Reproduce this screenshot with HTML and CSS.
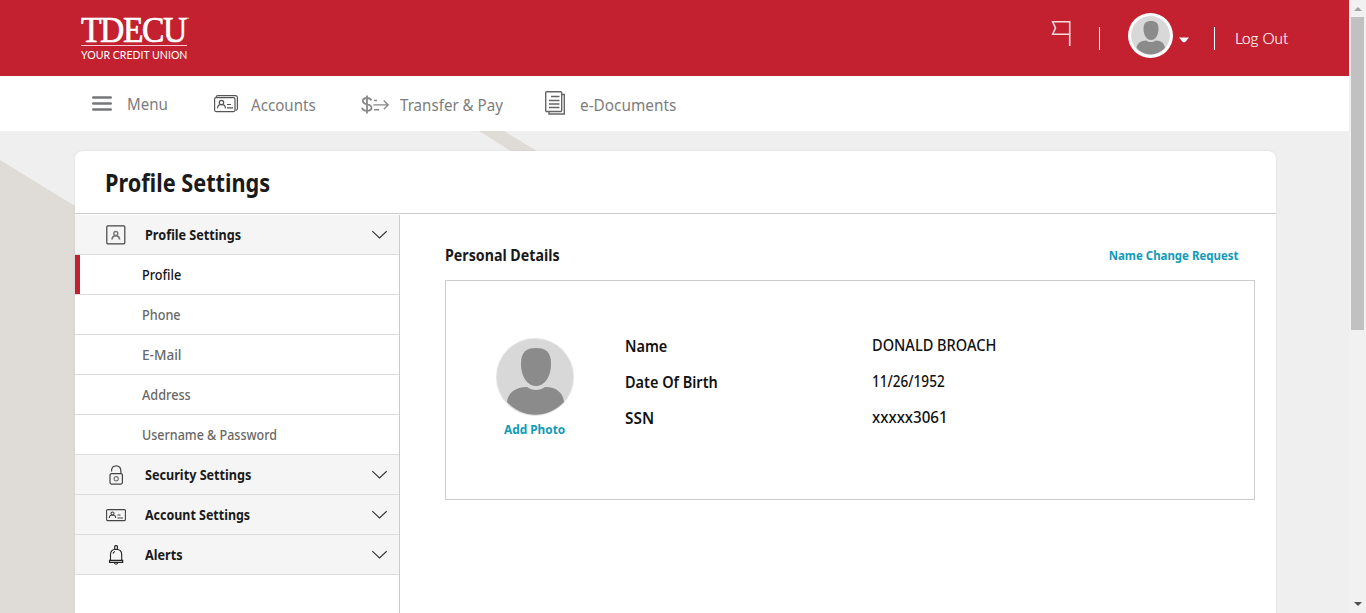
FILE: index.html
```html
<!DOCTYPE html>
<html lang="en">
<head>
<meta charset="utf-8">
<title>Profile Settings</title>
<link rel="stylesheet" href="styles.css">
</head>
<body>
<svg class="defs" width="0" height="0">
  <symbol id="person" viewBox="0 0 78 78">
    <circle cx="39" cy="39" r="39" fill="#e2e2e2"/>
    <circle cx="39" cy="39" r="38" fill="#d8d8d8"/>
    <path d="M25 26c0-12 5-16 15-16s15 4 15 16-6 22-15 22-15-10-15-22z" fill="#8b8b8b"/>
    <path d="M11 64c1-9 8-15 20-15 5 4 13 4 18 0 12 0 18 6 19 15-16 17-42 17-57 0z" fill="#8b8b8b"/>
  </symbol>
  <symbol id="chevron" viewBox="0 0 16 10"><path d="M1.300 1.200 8.500 8l7.200-6.800" fill="none" stroke="#333" stroke-width="1.100"/></symbol>
</svg>
<div class="window">
  <div class="page">
    <header class="header">
      <div class="logo">
        <div class="logo-name"><span>TDECU</span><small>™</small></div>
        <div class="logo-tag"><span>YOUR CREDIT UNION</span></div>
      </div>
      <div class="user">
        <svg class="flag" width="20" height="27" viewBox="0 0 20 27"><path d="M18.700 26V1.800H1.700L4.500 8 1.700 14.200h17" fill="none" stroke="#fbdde0" stroke-width="1.600"/></svg>
        <i class="divider first"></i>
        <span class="avatar"><svg width="39" height="39"><use href="#person"/></svg></span>
        <svg class="caret" width="10" height="6" viewBox="0 0 10 6"><path d="M0 .5h10L6.500 4.700q-1.500 1.200-3 0z" fill="#fff"/></svg>
        <i class="divider second"></i>
        <a class="logout"><span>Log Out</span></a>
      </div>
    </header>
    <nav class="nav">
      <a class="menu"><svg width="20" height="16" viewBox="0 0 20 16"><path d="M1.300 2.500h17.400M1.300 8.500h17.400M1.300 14.500h17.400" stroke="#757779" stroke-width="2.600" stroke-linecap="round"/></svg><span>Menu</span></a>
      <a class="accounts"><svg width="24" height="18" viewBox="0 0 24 18" fill="none" stroke="#555" stroke-width="1.200"><rect x=".6" y="2.600" width="20.400" height="14" rx="1.500"/><path d="M2 2.200Q2.200.6 4 .6h17.400q2 0 2 2v11q0 1.800-1.800 1.800"/><circle cx="7.500" cy="7.500" r="2.200"/><path d="M3.500 13.300q.5-3.600 3-3.600h2q2.500 0 3 3.600M13 9.500h4M13 12.800h6"/></svg><span>Accounts</span></a>
      <a class="transfer"><svg width="28" height="19" viewBox="0 0 28 19" fill="none" stroke="#888" stroke-width="1.800"><path d="M10.300 5.500Q9.500 3 6 3 2 3 1.800 5.700q0 2.500 4 3.500 4.700 1 4.700 3.500 0 3-4.500 3-4.300 0-5-3M6 .5v18"/><path d="M13 5.500h3M12.500 9.900H27M13 14.800h5M22.700 5.500l4.500 4.400-4.500 4.400" stroke-width="1.400"/></svg><span>Transfer &amp; Pay</span></a>
      <a class="documents"><svg width="20" height="25" viewBox="0 0 20 25" fill="none" stroke="#666" stroke-width="1.400"><rect x=".7" y="1.700" width="16" height="19.800" rx="1"/><path d="M17 4.500h2.300v19.500H4V21.800"/><path d="M6 6.500h8.500M4 10.500h10.500M4 14h10.500M4 17.500h10.500"/></svg><span>e-Documents</span></a>
    </nav>
    <div class="content">
      <svg class="backdrop" width="1349" height="482" viewBox="0 0 1349 482"><path d="M0 29 75 75 650 420V482H0zM479 0h25L700 119v20z" fill="#dfdcd8"/></svg>
      <main class="card">
        <h1><span>Profile Settings</span></h1>
        <div class="columns">
          <aside class="sidebar">
            <a class="group"><svg class="icon" width="20" height="20" viewBox="0 0 20 20" fill="none" stroke="#444" stroke-width="1.200"><rect x=".8" y=".8" width="18" height="18" rx="1"/><circle cx="9.800" cy="8.500" r="2" stroke="#777" stroke-width="1.400"/><path d="M6 14.500q.4-3.500 2.800-3.500h2q2.400 0 2.800 3.500" stroke="#777" stroke-width="1.700"/></svg><span>Profile Settings</span><svg class="chev" width="16" height="10"><use href="#chevron"/></svg></a>
            <a class="item active"><span>Profile</span></a>
            <a class="item"><span>Phone</span></a>
            <a class="item email"><span>E-Mail</span></a>
            <a class="item"><span>Address</span></a>
            <a class="item username"><span>Username &amp; Password</span></a>
            <a class="group"><svg class="icon" width="20" height="20" viewBox="0 0 20 20" fill="none" stroke="#444" stroke-width="1.200"><rect x="4" y="8.600" width="12.400" height="10.500" rx="1.500"/><path d="M5.500 6.500q0-5.700 4.700-5.700t4.700 5.700v2"/><circle cx="10.200" cy="13.800" r="2.100" stroke="#777"/></svg><span>Security Settings</span><svg class="chev" width="16" height="10"><use href="#chevron"/></svg></a>
            <a class="group account"><svg class="icon" width="20" height="20" viewBox="0 0 20 20" fill="none" stroke="#444" stroke-width="1.100"><rect x=".6" y="4.600" width="18.800" height="11" rx="1"/><circle cx="6.500" cy="8.500" r="1.500"/><path d="M3.300 13q.2-2.700 2-2.700h2.400q1.800 0 2 2.700M11.500 10h3M11.500 13h5.500"/></svg><span>Account Settings</span><svg class="chev" width="16" height="10"><use href="#chevron"/></svg></a>
            <a class="group"><svg class="icon" width="20" height="20" viewBox="0 0 20 20" fill="none" stroke="#222" stroke-width="1.100"><path d="M4.500 15.200V9.500Q4.500 4.300 10 4.200q5.700.1 5.700 5.300v5.700M3.500 15.400h13.200v2H3.500zM8.300 17.700q1.800 3 3.600 0M8.700 4V1.200q1.300-1.300 2.700 0V4M7 8.500q.5-1.500 2-2"/></svg><span>Alerts</span><svg class="chev" width="16" height="10"><use href="#chevron"/></svg></a>
          </aside>
          <section class="details">
            <div class="details-head"><h2><span>Personal Details</span></h2><a class="link request"><span>Name Change Request</span></a></div>
            <div class="panel">
              <div class="photo"><svg width="78" height="78"><use href="#person"/></svg><a class="link add"><span>Add Photo</span></a></div>
              <dl>
                <dt class="name"><span>Name</span></dt><dd class="name"><span>DONALD BROACH</span></dd>
                <dt class="birth"><span>Date Of Birth</span></dt><dd class="birth"><span>11/26/1952</span></dd>
                <dt class="ssn"><span>SSN</span></dt><dd class="ssn"><span>xxxxx3061</span></dd>
              </dl>
            </div>
          </section>
        </div>
      </main>
    </div>
  </div>
  <div class="scrollbar"><i class="up"></i><i class="thumb"></i><i class="down"></i></div>
</div>
</body>
</html>
```

FILE: styles.css
```css
* { box-sizing: border-box; }
body { margin: 0; height: 613px; overflow: hidden; font-family: "Noto Sans", "Open Sans", sans-serif; color: #1a1a1a; background: #efefef; }
h1, h2, dl, dt, dd { margin: 0; }
svg { display: block; flex: none; }
.defs { position: absolute; }
span { display: inline-block; white-space: nowrap; transform-origin: 0 50%; }
.window { display: grid; grid-template-columns: 1349px 17px; height: 613px; }
.page { display: flex; flex-direction: column; height: 613px; overflow: hidden; }
.header { height: 76px; flex: none; background: #c32030; color: #fff; display: flex; justify-content: space-between; padding: 13px 61px 0 81px; }
.logo { width: 106px; }
.logo-name { display: flex; height: 33px; border-bottom: 1px solid #f3c9cd; font: 35px/35px "Liberation Serif", serif; letter-spacing: -1.5px; }
.logo-name span { transform: scaleX(.96); -webkit-text-stroke: .7px #fff; }
.logo-name small { font-size: 4px; line-height: 11px; margin-left: -5px; letter-spacing: 0; }
.logo-tag { font: 11px/18px Lato, sans-serif; }
.logo-tag span { transform: scaleX(.96); }
.user { display: flex; align-items: flex-start; }
.flag { margin-top: 7px; }
.divider { width: 1px; height: 23px; margin-top: 14px; background: #fff; }
.divider.first { margin-left: 28px; }
.avatar { width: 45px; height: 45px; margin-left: 28px; padding: 3px; border-radius: 50%; background: #fff; }
.caret { margin: 24px 0 0 6px; }
.divider.second { margin-left: 25px; }
.logout { margin: 13px 0 0 20px; width: 53px; font: 300 16px/23px Lato, sans-serif; }
.logout span { transform: scaleX(.96); -webkit-text-stroke: .2px #fff; }
.nav { height: 55px; flex: none; display: flex; background: #fff; color: #7d7d7d; font-size: 17px; line-height: 24px; padding-left: 92px; }
.nav a { display: flex; }
.nav span { transform: scaleX(.89); }
.menu { width: 122px; padding-top: 16px; gap: 15px; }
.menu svg { margin-top: 3px; }
.accounts { width: 147px; padding-top: 17px; gap: 13px; }
.accounts svg { margin-top: 2px; }
.transfer { width: 184px; padding-top: 17px; gap: 11px; }
.transfer svg { margin-top: 2px; }
.documents { padding-top: 17px; gap: 15px; }
.documents svg { margin-top: -3px; }
.nav .documents span { transform: scaleX(.903); }
.content { flex: 1; padding: 20px 73px 0 75px; background: #efefef; position: relative; }
.backdrop { position: absolute; inset: 0; }
.card { position: relative; height: 480px; background: #fff; border-radius: 8px 8px 0 0; box-shadow: 0 0 3px rgba(0,0,0,.08); }
h1 { height: 63px; border-bottom: 1px solid #ccc; padding-left: 30px; font-size: 25px; line-height: 62px; font-weight: 700; }
h1 span { transform: scaleX(.868); }
.columns { display: flex; height: 417px; padding-top: 1px; }
.sidebar { width: 325px; border-right: 1px solid #ccc; }
.group, .item { display: flex; align-items: center; height: 40px; border-bottom: 1px solid #ddd; font-size: 15px; }
.group { background: #f5f5f5; padding: 0 12px 0 31px; font-weight: 700; }
.group span { margin: -2px 0 0 19px; transform: scaleX(.842); }
.group.account span { transform: scaleX(.83); }
.chev { margin-left: auto; }
.item { padding-left: 67px; color: #686868; font-weight: 500; }
.item span { margin-top: -2px; transform: scaleX(.845); }
.item.email span { transform: scaleX(.905); }
.item.username span { transform: scaleX(.834); }
.item.active { box-shadow: inset 5px 0 #c32030; color: #111; }
.details { flex: 1; padding: 27px 21px 0 45px; }
.details-head { display: flex; justify-content: space-between; height: 38px; padding-right: 17px; }
h2 { font-size: 16px; line-height: 26px; font-weight: 700; }
h2 span { transform: scaleX(.888); }
.link { color: #109bb8; font-size: 13px; line-height: 26px; font-weight: 700; }
.request span { transform: scaleX(.88); transform-origin: 100% 50%; }
.add span { transform: scaleX(.91); transform-origin: 50% 50%; }
.panel { height: 220px; border: 1px solid #ccc; display: flex; padding: 57px 0 0 50px; }
.photo { width: 78px; display: flex; flex-direction: column; align-items: center; }
dl { margin-left: 51px; display: grid; grid-template-columns: 247px 200px; grid-auto-rows: 36px; height: 108px; margin-top: -11px; font-size: 16px; line-height: 38px; color: #111; }
dt { font-weight: 600; }
dd { font-weight: 500; line-height: 36px; }
dt span { transform: scaleX(.905); }
dt.ssn span { transform: scaleX(.96); }
dd.name span { transform: scaleX(.91); }
dd.birth span { transform: scaleX(.85); }
dd.ssn span { transform: scaleX(.945); }
.scrollbar { background: #f1f1f1; display: flex; flex-direction: column; align-items: center; }
.up, .down { width: 0; height: 0; border: 4px solid transparent; }
.up { border-bottom-color: #a3a3a3; border-top: 0; margin: 7px 0 6px; }
.thumb { width: 13px; height: 313px; background: #c1c1c1; }
.down { border-top-color: #505050; border-bottom: 0; margin-top: auto; margin-bottom: 7px; }
```
